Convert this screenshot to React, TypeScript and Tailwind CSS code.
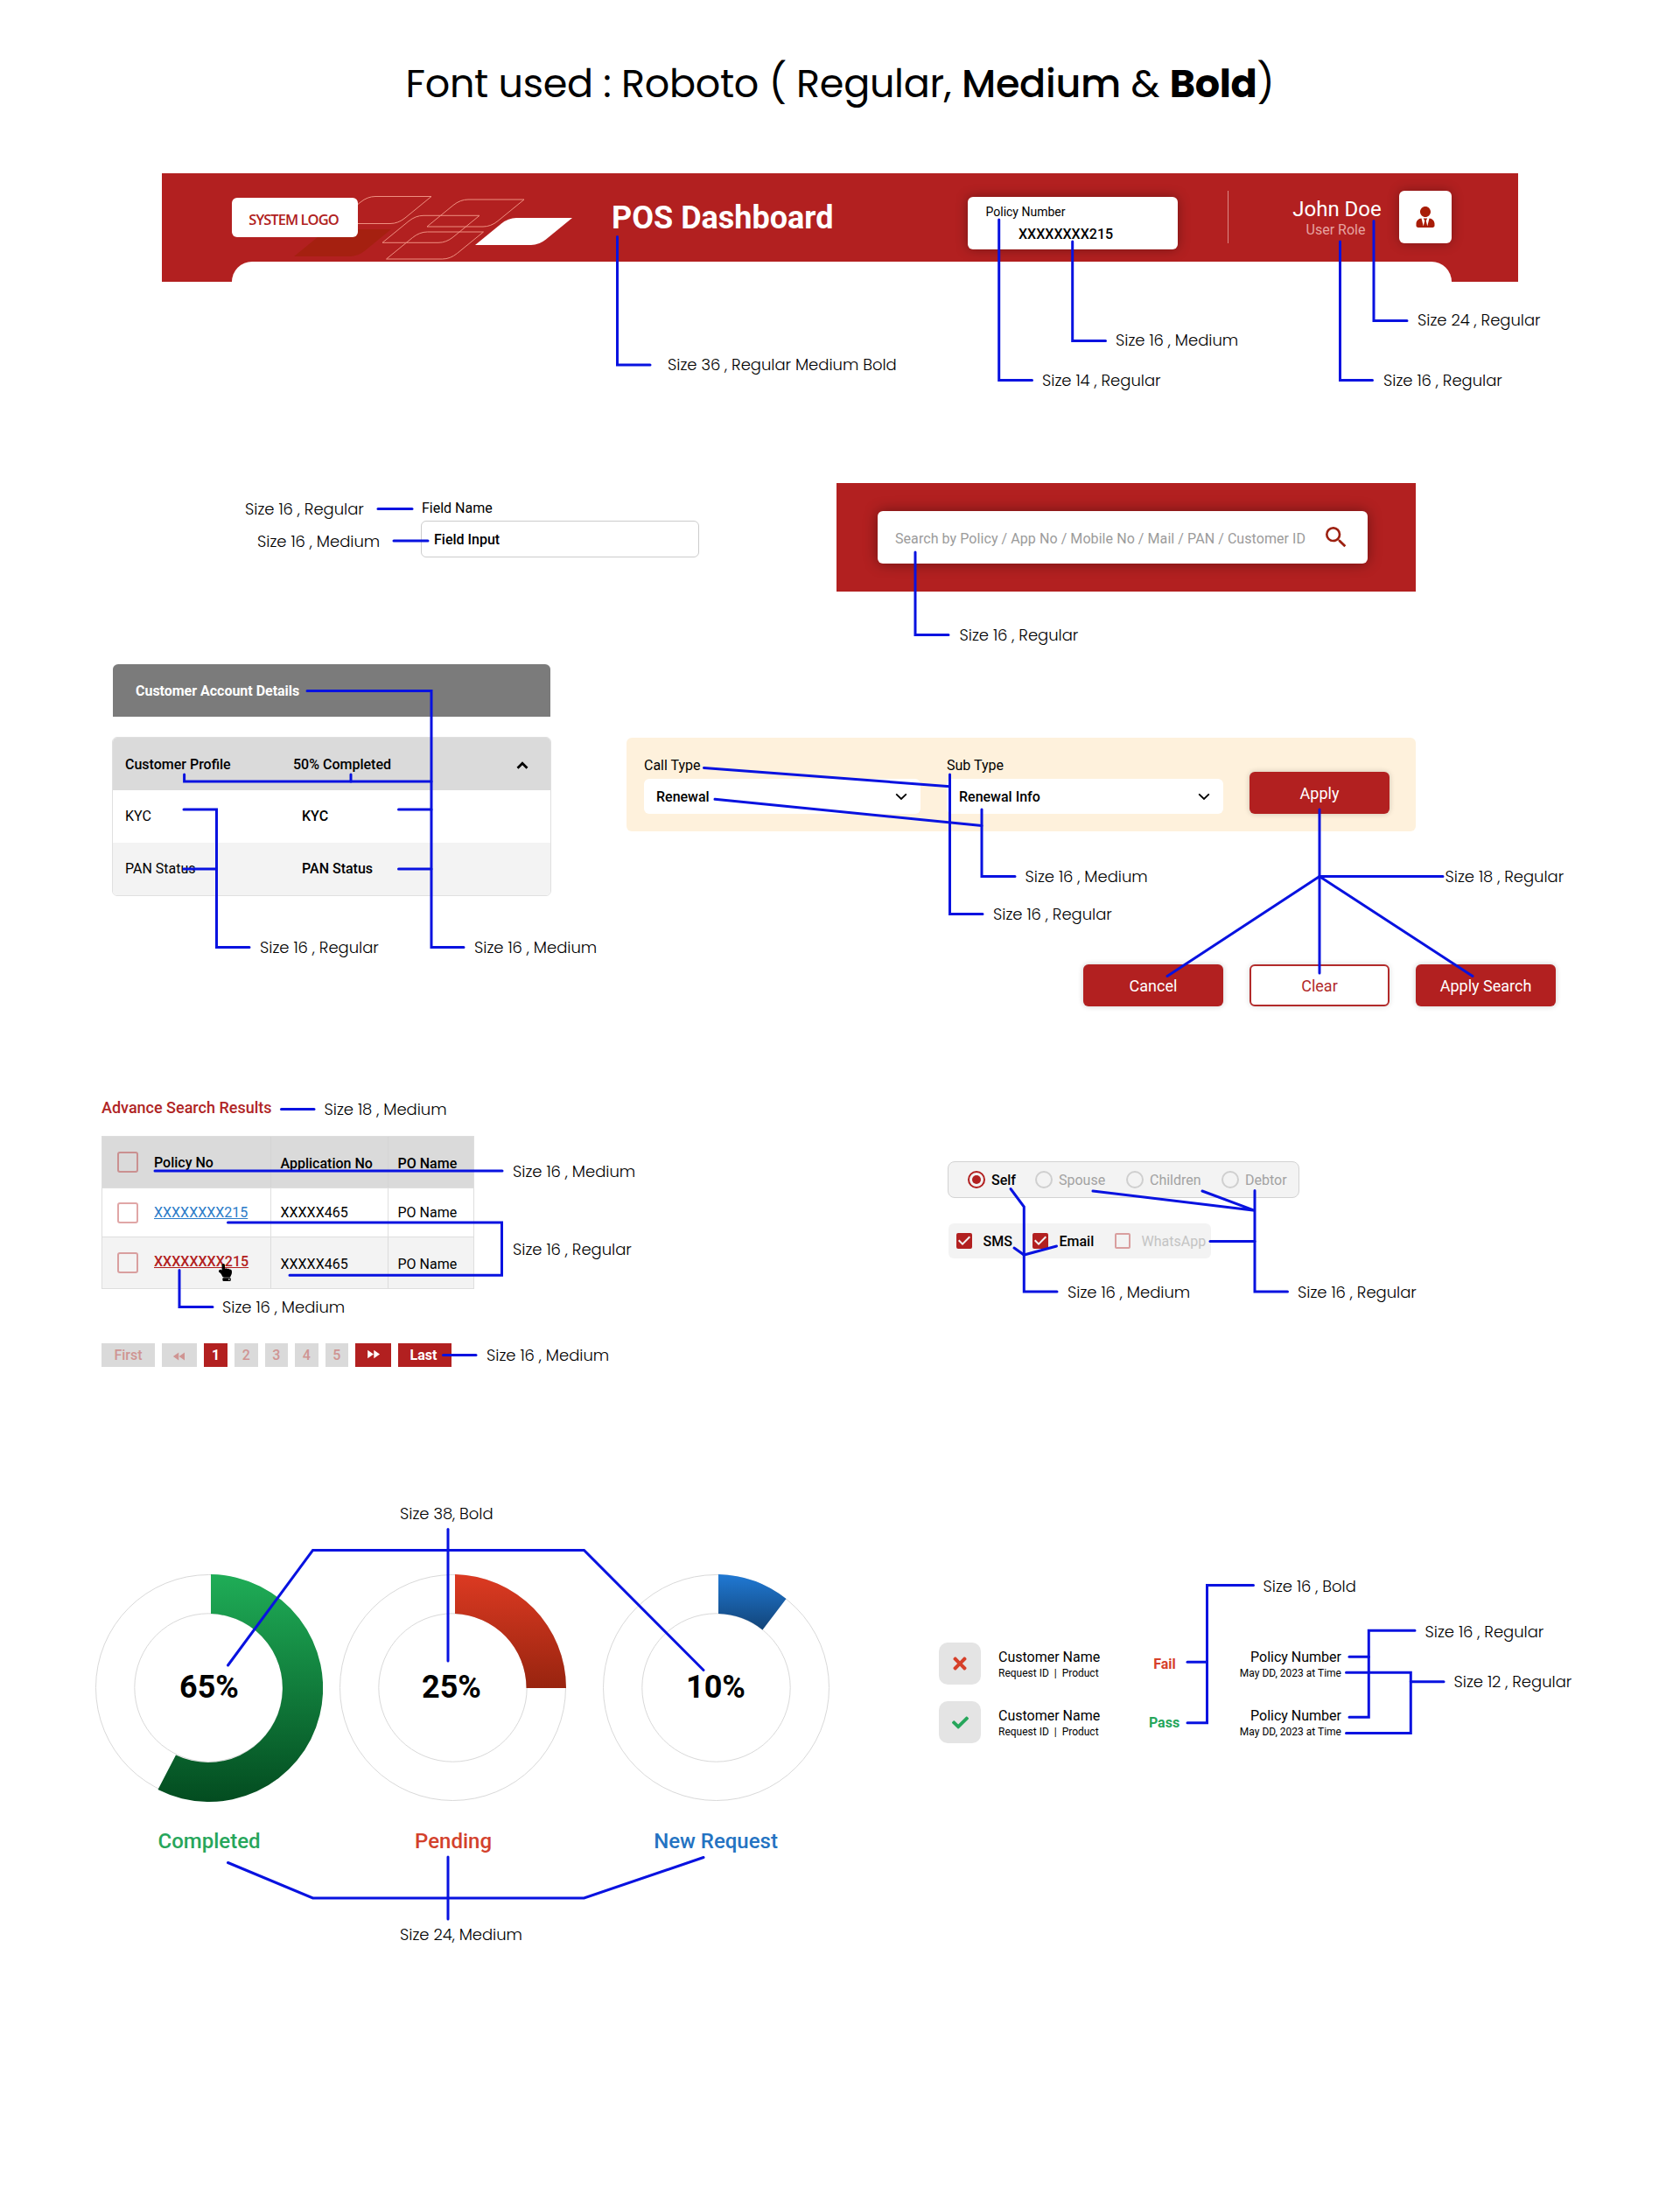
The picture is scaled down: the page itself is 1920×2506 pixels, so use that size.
import type { ReactNode } from "react";
import { FaUserTie, FaTimes, FaCheck, FaHandPointUp } from "react-icons/fa";
import {
  MdSearch,
  MdFastForward,
  MdFastRewind,
  MdCheckBox,
  MdCheckBoxOutlineBlank,
} from "react-icons/md";

const tile = "M0,31 L30,6.5 Q38,0 47,0 L111,0 L81,24.5 Q73,31 64,31 Z";

function HeaderArt() {
  return (
    <svg className="absolute left-[140px] top-[20px]" width="340" height="80" viewBox="325 218 340 80" fill="none">
      <g stroke="#ee8f80" strokeWidth="1">
        <path d={tile} transform="translate(382 224.5)" />
        <path d={tile} transform="translate(488 228)" />
        <path d={tile} transform="translate(437 246.3)" />
        <path d={tile} transform="translate(441.5 265)" />
      </g>
      <path d={tile} transform="translate(336 262)" fill="#a52010" />
      <path d={tile} transform="translate(543 249)" fill="#ffffff" />
    </svg>
  );
}

function Header() {
  return (
    <header className="relative ml-[185px] flex h-[124px] w-[1550px] flex-col justify-between bg-[#b22020]">
      <HeaderArt />
      <div className="relative flex h-[101px] items-start pl-[80px]">
        <div className="mt-[28px] flex h-[45px] w-[144px] items-center justify-center rounded-md bg-white">
          <span className="pr-[3px] pt-[4px] font-['Open_Sans',sans-serif] text-[16.5px] font-semibold leading-[20px] tracking-[-0.95px] text-[#b02020]">
            SYSTEM LOGO
          </span>
        </div>
        <h2 className="ml-[290px] mt-[30px] w-[407px] whitespace-nowrap text-[36px] font-bold leading-[42px] text-white">
          POS Dashboard
        </h2>
        <div className="mt-[27px] h-[60px] w-[240px] rounded-md bg-white shadow-[0_0_14px_rgba(0,0,0,0.35)]">
          <div className="ml-[20.5px] mt-[9px] text-[14px] leading-[16px] text-black">Policy Number</div>
          <div className="ml-[58px] mt-[8px] text-[16px] font-medium leading-[20px] text-black">XXXXXXXX215</div>
        </div>
        <div className="ml-[57px] mt-[20px] h-[60px] w-px bg-[#dc8a86]" />
        <div className="ml-[62px] mt-[26px] flex w-[124px] flex-col items-center">
          <span className="whitespace-nowrap text-[24px] leading-[30px] text-white">John Doe</span>
          <span className="pr-[3px] text-[16px] leading-[18px] text-[#e6a3a1]">User Role</span>
        </div>
        <div className="ml-[9px] mt-[20px] flex h-[60px] w-[60px] items-center justify-center rounded-md bg-white shadow-[0_0_14px_rgba(0,0,0,0.3)]">
          <FaUserTie className="h-[24px] w-[22px] text-[#a81c07]" />
        </div>
      </div>
      <div className="ml-[80px] mr-[76px] h-[23px] rounded-t-[24px] bg-white" />
    </header>
  );
}

function Button({ children, outline }: { children: ReactNode; outline?: boolean }) {
  return (
    <button
      className={
        outline
          ? "h-[48px] w-[160px] rounded-md border-2 border-[#b22a2a] bg-white pt-[2px] text-[18px] text-[#b22a2a] shadow-[0_0_6px_rgba(0,0,0,0.15)]"
          : "h-[48px] w-[160px] rounded-md bg-[#b22020] pt-[2px] text-[18px] text-white shadow-[0_0_6px_rgba(0,0,0,0.2)]"
      }
    >
      {children}
    </button>
  );
}

function Chevron({ up, bold }: { up?: boolean; bold?: boolean }) {
  return (
    <svg width="14" height="9" viewBox="0 0 14 9" fill="none" stroke="#000" strokeWidth={bold ? 2.8 : 1.8}>
      <path d={up ? "M1.5 7.7 L7 2.2 L12.5 7.7" : "M1.2 1.3 L7 7 L12.8 1.3"} />
    </svg>
  );
}

function Select({ label, value }: { label: string; value: string }) {
  return (
    <div className="w-[316px]">
      <div className="pt-px text-[16px] leading-[24px]">{label}</div>
      <div className="mt-[3px] flex h-[40px] items-center justify-between rounded-md bg-white pl-[14px] pr-[15px]">
        <span className="pt-[2px] text-[16px] font-medium">{value}</span>
        <Chevron />
      </div>
    </div>
  );
}

function AccountCard() {
  return (
    <div className="ml-[128px] w-[502px]">
      <div className="ml-px flex h-[60px] w-[500px] items-center rounded-t-md bg-[#7b7b7b] pl-[26px] pt-px text-[16px] font-bold tracking-[-0.02px] text-white">
        Customer Account Details
      </div>
      <div className="mt-[23px] overflow-hidden rounded-md border border-[#e0e0e0] text-[16px]">
        <div className="flex h-[60px] items-center bg-[#dadada] pl-[14px] pr-[25px] pt-[2px] font-medium">
          <span className="w-[192px]">Customer Profile</span>
          <span className="flex-1">50% Completed</span>
          <Chevron up bold />
        </div>
        <div className="flex h-[60px] items-center bg-white pl-[14px]">
          <span className="w-[202px]">KYC</span>
          <span className="font-medium">KYC</span>
        </div>
        <div className="flex h-[60px] items-center bg-[#f3f3f3] pl-[14px]">
          <span className="w-[202px]">PAN Status</span>
          <span className="font-medium">PAN Status</span>
        </div>
      </div>
    </div>
  );
}

function Box() {
  return <span className="h-[24px] w-[24px] shrink-0 rounded-[3px] border-[2.5px] border-[#b22020]/40" />;
}

function ResultsTable() {
  const first = "flex w-[193px] items-center gap-[18px] border-r border-[#d2d2d2]/70 pl-[17px]";
  const second = "flex w-[134px] items-center border-r border-[#d2d2d2]/70 pl-[10.5px]";
  return (
    <div className="ml-[116px] w-[426px]">
      <h3 className="pt-[4px] text-[18px] font-medium leading-[24px] text-[#b02525]">Advance Search Results</h3>
      <div className="mt-[20px] border border-[#dedede] text-[16px]">
        <div className="flex h-[58px] bg-[#dadada] font-medium">
          <div className={first}>
            <Box />
            <span className="pt-px">Policy No</span>
          </div>
          <div className={`${second} pt-[3px]`}>Application No</div>
          <div className="flex items-center pl-[10.5px] pt-[3px]">PO Name</div>
        </div>
        <div className="flex h-[56px] border-t border-[#dedede]">
          <div className={first}>
            <Box />
            <a className="text-[#2a7bc8] underline">XXXXXXXX215</a>
          </div>
          <div className={second}>XXXXX465</div>
          <div className="flex items-center pl-[10.5px]">PO Name</div>
        </div>
        <div className="flex h-[59px] border-t border-[#dedede] bg-[#f3f3f3]">
          <div className={`${first} relative`}>
            <Box />
            <a className="pb-[3px] font-medium text-[#b22020] underline">XXXXXXXX215</a>
            <FaHandPointUp className="absolute left-[131px] top-[30px] h-[20px] w-[19px] text-black" />
          </div>
          <div className={`${second} pt-[3px]`}>XXXXX465</div>
          <div className="flex items-center pl-[10.5px] pt-[3px]">PO Name</div>
        </div>
      </div>
      <div className="mt-[62px] flex h-[27px] gap-[8px] text-[16px] font-medium leading-[27px]">
        <span className="w-[61px] bg-[#dadada] text-center text-[#cf9492]">First</span>
        <span className="flex w-[40px] items-center justify-center bg-[#dadada] pt-[3px] text-[#cf9492]">
          <MdFastRewind className="h-[18px] w-[18px]" />
        </span>
        <span className="w-[27px] bg-[#b22020] text-center font-bold text-white">1</span>
        {["2", "3", "4", "5"].map((n) => (
          <span key={n} className="w-[26.5px] bg-[#dadada] text-center text-[#cf9492]">
            {n}
          </span>
        ))}
        <span className="flex w-[40.5px] items-center justify-center bg-[#b22020] pb-[3px] text-white">
          <MdFastForward className="h-[19px] w-[19px]" />
        </span>
        <span className="w-[61px] bg-[#b22020] pr-[2px] text-center font-bold text-white">Last</span>
      </div>
    </div>
  );
}

function Radio({ label, on, gap }: { label: string; on?: boolean; gap: string }) {
  return (
    <label className={`flex items-center ${gap} ${on ? "font-medium text-black" : "text-[#a2a2a2]"}`}>
      <span
        className={`flex h-[20px] w-[20px] items-center justify-center rounded-full border-2 ${
          on ? "border-[#b22020]" : "border-[#cfcfcf]"
        }`}
      >
        {on && <span className="h-[10px] w-[10px] rounded-full bg-[#b22020]" />}
      </span>
      <span className="pt-px">{label}</span>
    </label>
  );
}

function Choices() {
  return (
    <div className="ml-[541px] mt-[77px] text-[16px]">
      <div className="flex h-[42px] w-[402px] items-center rounded-lg border border-[#d2d2d2] bg-[#f3f3f3] pl-[22px]">
        <div className="w-[77px]"><Radio label="Self" on gap="gap-[7px]" /></div>
        <div className="w-[104px]"><Radio label="Spouse" gap="gap-[7px]" /></div>
        <div className="w-[109px]"><Radio label="Children" gap="gap-[7px]" /></div>
        <Radio label="Debtor" gap="gap-[7px]" />
      </div>
      <div className="ml-px mt-[29px] flex h-[40px] w-[300px] items-center rounded-md bg-[#f3f3f3] pl-[5.5px]">
        <MdCheckBox className="h-[24px] w-[24px] text-[#b22020]" />
        <span className="ml-[10px] w-[53px] pt-px font-medium">SMS</span>
        <MdCheckBox className="h-[24px] w-[24px] text-[#b22020]" />
        <span className="ml-[10px] w-[60px] pt-px font-medium">Email</span>
        <MdCheckBoxOutlineBlank className="h-[24px] w-[24px] text-[#b22020]/40" />
        <span className="ml-[10px] pt-px text-[#c4c4c4]">WhatsApp</span>
      </div>
    </div>
  );
}

type RingProps = {
  id: string;
  arc: string;
  from: string;
  to: string;
  value: string;
  label: string;
  color: string;
  nudge: string;
};

function Ring({ id, arc, from, to, value, label, color, nudge }: RingProps) {
  return (
    <div className="flex w-[260px] flex-col items-center">
      <div className="relative flex h-[260px] w-[260px] items-center justify-center">
        <svg className="absolute inset-0" width="260" height="260" viewBox="0 0 260 260" fill="none">
          <defs>
            <linearGradient id={id} x1="0" y1="0" x2="0" y2="1">
              <stop offset="0" stopColor={from} />
              <stop offset="1" stopColor={to} />
            </linearGradient>
          </defs>
          <circle cx="129.5" cy="129.5" r="129" stroke="#d9d9d9" />
          <circle cx="129.5" cy="129.5" r="84.7" stroke="#d9d9d9" />
          <path d={arc} fill={`url(#${id})`} />
        </svg>
        <span className={`relative pb-[3px] text-[36px] font-bold leading-[42px] text-black ${nudge}`}>{value}</span>
      </div>
      <div className={`mt-[29px] whitespace-nowrap text-[24px] font-medium leading-[32px] ${color}`}>{label}</div>
    </div>
  );
}

function Rings() {
  return (
    <div className="ml-[109px] flex w-[840px]">
      <Ring
        id="done"
        arc="M132 0 A130 130 0 1 1 71.5 246 L92 206.5 A85 85 0 1 0 132 45 Z"
        from="#1fad57"
        to="#034c20"
        value="65%"
        label="Completed"
        color="text-[#26a65b]"
        nudge=""
      />
      <div className="ml-[19px]">
        <Ring
          id="wait"
          arc="M132 0 A130 130 0 0 1 259 130 L213.5 130 A85 85 0 0 0 132 45 Z"
          from="#dc3a22"
          to="#98240f"
          value="25%"
          label="Pending"
          color="text-[#d3412c]"
          nudge="right-[2px]"
        />
      </div>
      <div className="ml-[41px]">
        <Ring
          id="fresh"
          arc="M132 0 A130 130 0 0 1 209.5 28 L182.5 63.5 A85 85 0 0 0 132 45 Z"
          from="#2079d4"
          to="#124478"
          value="10%"
          label="New Request"
          color="text-[#2473c2] pr-[2px]"
          nudge="right-px"
        />
      </div>
    </div>
  );
}

function RequestRow({ pass }: { pass?: boolean }) {
  return (
    <div className="flex h-[48px] w-[460px] items-start">
      <div className="flex h-[48px] w-[48px] items-center justify-center rounded-[10px] bg-[#e4e4e4]">
        {pass ? (
          <FaCheck className="h-[19px] w-[19px] text-[#26a65b]" />
        ) : (
          <FaTimes className="h-[22px] w-[22px] text-[#d6402a]" />
        )}
      </div>
      <div className="ml-[20px] mt-[6px] w-[162px]">
        <div className="text-[16px] leading-[22px]">Customer Name</div>
        <div className="-mt-px whitespace-pre text-[12px] leading-[16px]">Request ID  |  Product</div>
      </div>
      <div
        className={`mt-[17px] w-[56px] text-center text-[16px] font-bold leading-[16px] ${
          pass ? "pr-px text-[#26a65b]" : "text-[#d6402a]"
        }`}
      >
        {pass ? "Pass" : "Fail"}
      </div>
      <div className="ml-auto mt-[6px] text-right">
        <div className="text-[16px] leading-[22px]">Policy Number</div>
        <div className="-mt-px text-[12px] leading-[16px]">May DD, 2023 at Time</div>
      </div>
    </div>
  );
}

const connectors = [
  "M705.5 270.5V417H743",
  "M1141.7 251V434.5H1179.5",
  "M1225.7 276V389.5H1263.5",
  "M1570 252.5V366.5H1608",
  "M1531.5 276V434.5H1568.5",
  "M432 581.5H471",
  "M450 618H489",
  "M1046 631V725.5H1084",
  "M351 789.5H493V1082.5H530",
  "M210.6 885V893H493",
  "M401 885V893",
  "M455.5 925H493",
  "M455.5 993H493",
  "M210 925H247.5V1082.5H285",
  "M210 993H247.5",
  "M804.5 877.5L1085.5 898.7",
  "M817 913.3L1122 943.5",
  "M1085.5 885V1044.5H1123",
  "M1122 925V1001.5H1160",
  "M1508 925V1112",
  "M1649 1001.5H1508L1334 1115.5",
  "M1508 1001.5L1683 1115.5",
  "M321.5 1267.5H359",
  "M177 1338H574",
  "M260.5 1397H573.5V1457.3H331",
  "M205 1451.5V1493.5H243",
  "M506.5 1548.5H544",
  "M1155 1358.5L1170.3 1379V1476H1208",
  "M1159 1426L1170.3 1434L1207.5 1424",
  "M1434 1360.5V1476H1471.5",
  "M1249 1361L1434 1383.3L1374 1361",
  "M1383 1418.5H1434",
  "M512 1747.5V1898",
  "M260.5 1903L357.5 1771.5H667.5L804 1908.5",
  "M260.5 2128.5L357.5 2169H667.5L804 2122.5",
  "M512 2122V2193",
  "M1357 1899.3H1379.5",
  "M1432.5 1811.5H1379.5V1968.7H1357",
  "M1542 1893.3H1564.3",
  "M1617 1863.3H1564.3V1962.3H1542",
  "M1538.5 1911.3H1612.3V1980.5H1538.5",
  "M1612.3 1921.8H1650",
];

const notes: { x: number; y: number; text: string }[] = [
  { x: 763, y: 423, text: "Size 36 , Regular Medium Bold" },
  { x: 1191, y: 441, text: "Size 14 , Regular" },
  { x: 1275, y: 395, text: "Size 16 , Medium" },
  { x: 1620, y: 372, text: "Size 24 , Regular" },
  { x: 1581, y: 441, text: "Size 16 , Regular" },
  { x: 280, y: 588, text: "Size 16 , Regular" },
  { x: 294, y: 625, text: "Size 16 , Medium" },
  { x: 1096.5, y: 732, text: "Size 16 , Regular" },
  { x: 297, y: 1089, text: "Size 16 , Regular" },
  { x: 542, y: 1089, text: "Size 16 , Medium" },
  { x: 1171.5, y: 1008, text: "Size 16 , Medium" },
  { x: 1135, y: 1051, text: "Size 16 , Regular" },
  { x: 1651.5, y: 1008, text: "Size 18 , Regular" },
  { x: 370.5, y: 1274, text: "Size 18 , Medium" },
  { x: 586, y: 1345, text: "Size 16 , Medium" },
  { x: 586, y: 1434, text: "Size 16 , Regular" },
  { x: 254, y: 1500, text: "Size 16 , Medium" },
  { x: 556, y: 1555, text: "Size 16 , Medium" },
  { x: 1220, y: 1483, text: "Size 16 , Medium" },
  { x: 1483, y: 1483, text: "Size 16 , Regular" },
  { x: 457, y: 1736, text: "Size 38, Bold" },
  { x: 457, y: 2217, text: "Size 24, Medium" },
  { x: 1443.5, y: 1819, text: "Size 16 , Bold" },
  { x: 1628.5, y: 1871, text: "Size 16 , Regular" },
  { x: 1661.5, y: 1928, text: "Size 12 , Regular" },
];

function Callouts() {
  return (
    <div className="pointer-events-none absolute inset-0">
      <svg width="1920" height="2506" viewBox="0 0 1920 2506" fill="none" stroke="#0812e0" strokeWidth="3" strokeLinecap="round">
        {connectors.map((d) => (
          <path key={d} d={d} />
        ))}
      </svg>
      {notes.map((n) => (
        <span
          key={`${n.x}-${n.y}`}
          className="absolute whitespace-nowrap font-['Poppins','Inter',sans-serif] text-[18px] font-light leading-[24px] tracking-[-0.02px] text-black"
          style={{ left: n.x, top: n.y - 18 }}
        >
          {n.text}
        </span>
      ))}
    </div>
  );
}

export default function App() {
  return (
    <div className="relative h-[2506px] w-[1920px] overflow-hidden bg-white font-['Roboto',sans-serif] leading-[24px] text-black">
      <div className="flex h-[198px] justify-center pt-[64px]">
        <h1 className="h-[64px] whitespace-pre font-['Poppins','Inter',sans-serif] text-[44.5px] font-normal leading-[64px] tracking-[-0.3px]">
          Font used : Roboto ( Regular, <span className="font-medium">Medium</span> &amp;{" "}
          <span className="font-bold">Bold</span>)
        </h1>
      </div>

      <Header />

      <section className="mt-[230px] flex h-[207px] items-start">
        <div className="ml-[481px] mt-[17px] w-[318px] text-[16px]">
          <div className="pl-px leading-[24px]">Field Name</div>
          <div className="mt-[2px] flex h-[42px] items-center rounded-md border border-[#cccccc] pl-[14px] pt-[2px] font-medium">
            Field Input
          </div>
        </div>
        <div className="ml-[157px] flex h-[124px] w-[662px] items-center justify-center bg-[#b22020] pr-[8px]">
          <div className="flex h-[60px] w-[560px] items-center justify-between rounded-md bg-white pl-[20px] pr-[20px] shadow-[0_0_16px_rgba(0,0,0,0.4)]">
            <span className="whitespace-nowrap pt-[3px] text-[16px] tracking-[0.07px] text-[#9b9b9b]">
              Search by Policy / App No / Mobile No / Mail / PAN / Customer ID
            </span>
            <MdSearch className="h-[32px] w-[32px] text-[#9c2010]" />
          </div>
        </div>
      </section>

      <section className="flex h-[489px] items-start">
        <AccountCard />
        <div className="ml-[86px] mt-[84px]">
          <div className="flex h-[107px] w-[902px] rounded-md bg-[#fef1dc] pl-[20px] pt-[19px]">
            <Select label="Call Type" value="Renewal" />
            <div className="ml-[30px]">
              <Select label="Sub Type" value="Renewal Info" />
            </div>
            <div className="ml-[30px] mt-[20px]">
              <Button>Apply</Button>
            </div>
          </div>
          <div className="ml-[522px] mt-[152px] flex gap-[30px]">
            <Button>Cancel</Button>
            <Button outline>Clear</Button>
            <Button>Apply Search</Button>
          </div>
        </div>
      </section>

      <section className="flex h-[551px] items-start pt-[2px]">
        <ResultsTable />
        <Choices />
      </section>

      <section className="flex items-start">
        <Rings />
        <div className="ml-[124px] mt-[78px] flex flex-col gap-[19px]">
          <RequestRow />
          <RequestRow pass />
        </div>
      </section>

      <Callouts />
    </div>
  );
}
